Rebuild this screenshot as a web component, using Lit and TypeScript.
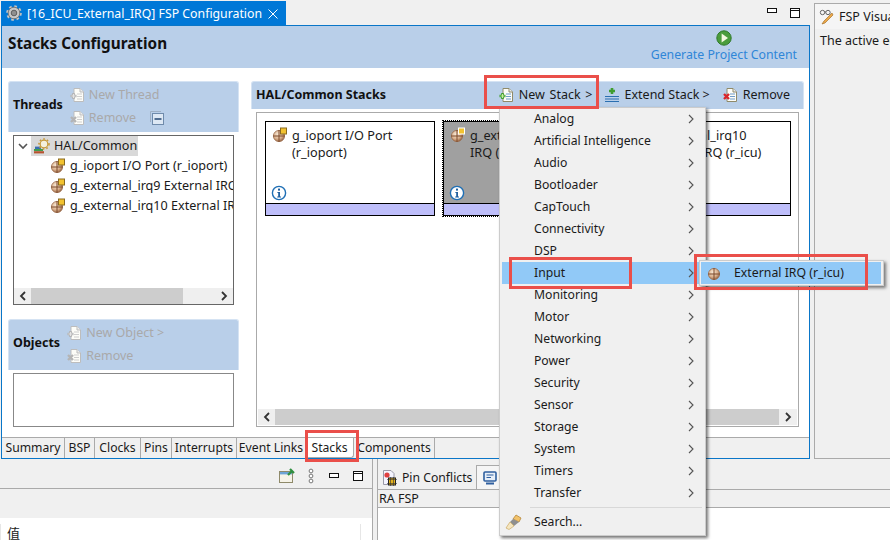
import { LitElement, html, css, svg } from "lit";
import { customElement } from "lit/decorators.js";

const comp = (badge = true, selected = false) => html`<svg class="ic" width="16" height="16" viewBox="0 0 16 16">
  <defs><radialGradient id="cg" cx="40%" cy="35%" r="70%"><stop offset="0" stop-color="#f8ead8"/><stop offset=".6" stop-color="#d8ae8a"/><stop offset="1" stop-color="#8e5b3a"/></radialGradient></defs>
  <circle cx="7" cy="9" r="5.6" fill="url(#cg)" stroke="#9a6b4a" stroke-width=".8"/>
  <path d="M7 3V15M1.2 9H12.8" stroke="#7d4a2c" stroke-width="1" fill="none"/>
  ${badge ? svg`<rect x="8.5" y="1" width="6" height="6" fill="#f2c230" stroke="${selected ? "#fff" : "#8a6a20"}" stroke-width="1"/>` : ""}
</svg>`;

const doc = (mark: "plus" | "x", on: boolean) => {
  const page = on ? "#8f8a6a" : "#bdbdbd";
  const lines = on ? "#6f9bc8" : "#cfcfcf";
  const c = mark === "plus" ? (on ? "#3f9d2f" : "#b4b4b4") : on ? "#d9262a" : "#b4b4b4";
  return html`<svg class="ic" width="16" height="16" viewBox="0 0 16 16">
    <path d="M5 1.5H11L14.5 5V14.5H5Z" fill="#fdfdf8" stroke="${page}" stroke-width="1"/>
    <path d="M11 1.5V5H14.5" fill="#eee" stroke="${page}"/>
    <path d="M8 7H13M8 9.5H13M8 12H13" stroke="${lines}" stroke-width="1"/>
    ${mark === "plus"
      ? svg`<path d="M4.5 6V12M1.5 9H7.5" stroke="${c}" stroke-width="2.6"/><path d="M4.5 7V11M2.5 9H6.5" stroke="${on ? "#c6ef9f" : "#e4e4e4"}" stroke-width="1"/>`
      : svg`<path d="M2 7L7 12M7 7L2 12" stroke="${c}" stroke-width="2.4"/>`}
  </svg>`;
};

const info = () => html`<svg class="ic" width="16" height="16" viewBox="0 0 16 16">
  <circle cx="8" cy="8" r="6.6" fill="#fff" stroke="#1f6fb5" stroke-width="1.4"/>
  <rect x="7" y="3.6" width="2" height="2" fill="#1f5f9f"/>
  <path d="M6.4 7H9V11.4H10V12.4H6.2V11.4H7.2V8H6.4Z" fill="#1f5f9f"/>
</svg>`;

const arrow = () => html`<svg class="arr" width="6" height="10" viewBox="0 0 6 10"><path d="M1 1L5 5L1 9" fill="none" stroke="#555" stroke-width="1.1"/></svg>`;

const scrollArrow = (left: boolean) => html`<svg width="8" height="10" viewBox="0 0 8 10"><path d="${left ? "M6 1L2 5L6 9" : "M2 1L6 5L2 9"}" fill="none" stroke="#333" stroke-width="1.8"/></svg>`;

const minIcon = () => html`<svg width="11" height="6" viewBox="0 0 11 6"><rect x=".5" y=".5" width="9" height="4" fill="#fff" stroke="#111"/></svg>`;
const maxIcon = () => html`<svg width="11" height="11" viewBox="0 0 11 11"><rect x=".5" y=".5" width="9" height="9" fill="#fff" stroke="#111"/><path d="M1 2.5H9" stroke="#111"/></svg>`;

const MENU = ["Analog","Artificial Intelligence","Audio","Bootloader","CapTouch","Connectivity","DSP","Input","Monitoring","Motor","Networking","Power","Security","Sensor","Storage","System","Timers","Transfer"];
const TABS = [["Summary",63],["BSP",30],["Clocks",46],["Pins",31],["Interrupts",65],["Event Links",69],["Stacks",48],["Components",81]] as const;

@customElement("app-root")
export class AppRoot extends LitElement {
  static styles = css`
    :host { display:block; position:relative; width:890px; height:540px; overflow:hidden; background:#f0f0f0; font:12.5px/16px "Noto Sans","Open Sans",sans-serif; color:#1a1a1a; }
    .ic, svg { display:block; flex:none; }
    .main { display:flex; height:459px; padding-left:1px; }
    .editor { width:809px; display:flex; flex-direction:column; }
    .tabbar { height:25px; display:flex; flex:none; padding-top:1px; box-sizing:border-box; }
    .edtab { width:285px; background:#0078d7; color:#fff; display:flex; align-items:center; padding:0 8px 0 5px; box-sizing:border-box; gap:5px; font-size:12.3px; white-space:nowrap; }
    .edtab span { padding-top:2px; }
    .edtab .x { margin:2px 0 0 auto; }
    .winbtns { margin-left:auto; display:flex; gap:12px; padding:7px 9px 0 0; }
    .frame { flex:1; border:1px solid #0a76c8; background:#fff; display:flex; flex-direction:column; min-height:0; }
    .head { height:42px; flex:none; background:#b9cfe9; display:flex; justify-content:space-between; padding:0 12px 0 6px; }
    .title { font-weight:700; font-size:15.3px; line-height:35px; color:#111; }
    .gen { display:flex; flex-direction:column; align-items:center; padding-top:4px; color:#2f86d8; font-size:12.3px; gap:1px; }
    .content { flex:1; display:flex; gap:12px; padding:13px 5px 0 6px; min-height:0; }
    .left { width:231px; display:flex; flex-direction:column; flex:none; }
    .sec { height:51px; flex:none; box-sizing:border-box; background:#b9cfe9; border:1px solid #d5e3f3; border-bottom:none; border-radius:3px 3px 0 0; display:flex; align-items:center; padding:0 0 2px 4px; }
    .sec b { font-size:12.5px; color:#111; margin-bottom:2px; }
    .btns { display:flex; flex-direction:column; gap:7px; margin-left:6px; }
    .btn { display:flex; align-items:center; gap:4px; color:#a9a9a9; height:16px; white-space:nowrap; }
    .collapse { margin-left:10px; }
    .tree { height:170px; margin:3px 5px 14px; border:1px solid #666; box-sizing:border-box; background:#fff; display:flex; flex-direction:column; overflow:hidden; flex:none; font-size:12.6px; }
    .rows { flex:1; padding-top:0; overflow:hidden; }
    .row { display:flex; align-items:center; height:20px; white-space:nowrap; gap:4px; padding-left:36px; }
    .row.root { padding-left:4px; gap:3px; }
    .chev { width:10px; }
    .rootlabel { display:flex; align-items:center; gap:3px; background:#d9d9d9; height:20px; padding:0 1px 0 2px; }
    .hs { height:16px; flex:none; background:#efefef; display:flex; align-items:center; justify-content:space-between; padding:0 5px; position:relative; }
    .thumb { position:absolute; top:0; bottom:0; background:#cdcdcd; }
    .tree .thumb { left:17px; width:152px; }
    .objbox { height:54px; margin:3px 5px 0; border:1px solid #888; box-sizing:border-box; background:#fff; flex:none; }
    .right { flex:1; display:flex; flex-direction:column; min-width:0; }
    .rhead { height:28px; flex:none; box-sizing:border-box; background:#b9cfe9; border:1px solid #d5e3f3; border-bottom:none; border-radius:3px 3px 0 0; display:flex; align-items:center; padding:0 13px 2px 4px; }
    .rhead b { font-size:12.5px; color:#111; }
    .tools { margin-left:auto; display:flex; align-items:center; gap:12px; }
    .tool { display:flex; align-items:center; gap:5px; color:#1a1a1a; white-space:nowrap; }
    .tool.new { word-spacing:1.5px; margin-right:-1px; }
    .stackbox { height:315px; margin:3px 5px 0; border:1px solid #aaa; box-sizing:border-box; display:flex; flex-direction:column; background:#fff; flex:none; }
    .cards { flex:1; display:flex; gap:8px; padding:8px 0 0 8px; font-size:12.7px; }
    .card { width:170px; height:95px; box-sizing:border-box; border:1px solid #000; display:flex; flex-direction:column; background:#fff; overflow:hidden; }
    .card.sel { background:#a0a0a0; outline:1px dotted #000; }
    .card .body { flex:1; position:relative; display:flex; gap:4px; padding:5px 0 0 6px; line-height:17px; white-space:nowrap; }
    .card .inf { position:absolute; left:5px; bottom:2px; }
    .strip { height:11px; flex:none; background:#bebefa; border-top:1px solid #000; }
    .stackbox .hs { margin:0 1px 1px; }
    .stackbox .thumb { left:17px; width:504px; }
    .pagetabs { margin-top:auto; height:21px; flex:none; background:#f0f0f0; border-top:1px solid #aaa; display:flex; font-size:12.2px; box-sizing:border-box; }
    .pt { box-sizing:border-box; border-right:1px solid #aaa; text-align:center; line-height:20px; }
    .pt.on { background:#fff; border-bottom:1px solid #aaa; border-radius:0 0 3px 3px; }
    .side { margin-left:4px; flex:1; border:1px solid #aaa; border-right:none; margin-top:3px; background:#f0f0f0; display:flex; flex-direction:column; overflow:hidden; }
    .sidetab { height:25px; flex:none; display:flex; align-items:center; gap:4px; padding:0 0 0 4px; white-space:nowrap; background:#f5f5f5; overflow:hidden; }
    .sidebody { padding:4px 0 0 5px; white-space:nowrap; background:#f0f0f0; flex:1; }
    .bottom { height:81px; display:flex; }
    .bl { width:372px; flex:none; display:flex; flex-direction:column; border-right:1px solid #aaa; }
    .bltool { height:30px; flex:none; box-sizing:border-box; border-bottom:1px solid #aaa; display:flex; align-items:center; justify-content:flex-end; gap:13px; padding:5px 8px 0 0; }
    .bltool .mn { margin-left:2px; }
    .blgap { height:29px; flex:none; }
    .blbody { flex:1; background:#fff; padding:6px 0 0 0; min-height:0; }
    .cols { width:361px; height:100%; box-sizing:border-box; border:solid #e6e6e6; border-width:0 1px; padding:0 0 0 6px; font-size:13px; line-height:18px; font-family:"Noto Sans CJK SC","Noto Sans",sans-serif; }
    .br { margin-left:4px; flex:1; display:flex; flex-direction:column; border-left:1px solid #aaa; }
    .brtabs { height:31px; flex:none; box-sizing:border-box; border-bottom:1px solid #aaa; display:flex; padding-top:6px; font-size:12.2px; }
    .brt { display:flex; align-items:center; gap:3px; padding:2px 0 0 3px; width:98px; box-sizing:border-box; white-space:nowrap; }
    .brt.on { width:40px; background:#f5f5f5; border:1px solid #aaa; border-bottom:none; padding:0 0 0 6px; }
    .brlabel { height:18px; flex:none; box-sizing:border-box; border-bottom:1px solid #aaa; padding-left:1px; line-height:17px; }
    .brbody { flex:1; background:#fff; }
    .menu { position:absolute; left:499px; top:107px; width:207px; height:429px; box-sizing:border-box; background:#f0f0f0; border:1px solid #ccc; box-shadow:2px 2px 3px rgba(0,0,0,.55); display:flex; flex-direction:column; font-size:12.2px; }
    .mi { height:22px; flex:none; display:flex; align-items:center; justify-content:space-between; padding:0 11px 0 34px; white-space:nowrap; }
    .mi.on { background:#91c9f7; margin-left:2px; padding-left:32px; }
    .sep { height:1px; background:#d8d8d8; margin:3px 3px 3px 30px; flex:none; }
    .search { justify-content:flex-start; padding-left:5px; gap:11px; }
    .sub { position:absolute; left:699px; top:260px; width:185px; height:26px; box-sizing:border-box; background:#f0f0f0; border:1px solid #ccc; padding:1px 2px 1px 1px; box-shadow:2px 2px 3px rgba(0,0,0,.5); font-size:12.3px; }
    .sub .mi2 { height:22px; background:#91c9f7; display:flex; align-items:center; gap:11px; padding-left:6px; white-space:nowrap; }
    .red { position:absolute; box-sizing:border-box; border:3px solid #ea4f4a; pointer-events:none; }
    .r1 { left:484px; top:75px; width:115px; height:34px; }
    .r2 { left:509px; top:257px; width:123px; height:32px; }
    .r3 { left:694px; top:254px; width:174px; height:36px; }
    .r4 { left:305px; top:430px; width:54px; height:32px; }
  `;

  render() {
    return html`
      <div class="main">
        <div class="editor">
          <div class="tabbar">
            <div class="edtab">
              <svg width="16" height="16" viewBox="0 0 16 16"><circle cx="8" cy="8" r="6.6" fill="none" stroke="#c4c4c4" stroke-width="2.4" stroke-dasharray="2.6 2.6"/><circle cx="8" cy="8" r="5.8" fill="#c8c8c8" stroke="#7a7a7a" stroke-width="1"/><circle cx="8" cy="8" r="2.8" fill="#8f8f8f" stroke="#5f5f5f"/></svg>
              <span>[16_ICU_External_IRQ] FSP Configuration</span>
              <svg class="x" width="10" height="10" viewBox="0 0 10 10"><path d="M.5 .5L9.5 9.5M9.5 .5L.5 9.5" stroke="#fff" stroke-width="1"/></svg>
            </div>
            <div class="winbtns">${minIcon()}${maxIcon()}</div>
          </div>
          <div class="frame">
            <div class="head">
              <div class="title">Stacks Configuration</div>
              <div class="gen">
                <svg width="16" height="16" viewBox="0 0 16 16"><circle cx="8" cy="8" r="7.2" fill="#4a9c3c" stroke="#2f7a2a"/><path d="M5.6 3.4L12 8L5.6 12.6Z" fill="#f4f8df"/></svg>
                <span>Generate Project Content</span>
              </div>
            </div>
            <div class="content">
              <div class="left">
                <div class="sec threads">
                  <b>Threads</b>
                  <div class="btns">
                    <div class="btn">${doc("plus", false)}<span>New Thread</span></div>
                    <div class="btn">${doc("x", false)}<span>Remove</span>
                      <svg class="collapse" width="14" height="14" viewBox="0 0 14 14"><rect x="2.5" y="2.5" width="11" height="11" fill="#dde8f4" stroke="#6f8bab"/><path d="M.5 11V.5H11" fill="none" stroke="#9fb0c4"/><path d="M4.5 8H11.5" stroke="#2f4f78" stroke-width="1.6"/></svg>
                    </div>
                  </div>
                </div>
                <div class="tree">
                  <div class="rows">
                    <div class="row root">
                      <svg class="chev" width="10" height="7" viewBox="0 0 10 7"><path d="M1 1L5 5L9 1" fill="none" stroke="#555" stroke-width="1.6"/></svg>
                      <div class="rootlabel">
                        <svg width="18" height="16" viewBox="0 0 18 16"><path d="M1 11H10V13H1Z" fill="#3f9d4f"/><path d="M1 13.2H11V15.4H1Z" fill="#b5532f"/><path d="M2 8.6H8V11H2Z" fill="#3a6fb0"/><circle cx="11" cy="6" r="3.8" fill="#f4f0de" stroke="#c79a3a" stroke-width="1.2"/><circle cx="11" cy="6" r="5" fill="none" stroke="#c79a3a" stroke-width="1.6" stroke-dasharray="1.6 2.1"/></svg>
                        <span>HAL/Common</span>
                      </div>
                    </div>
                    <div class="row">${comp()}<span>g_ioport I/O Port (r_ioport)</span></div>
                    <div class="row">${comp()}<span>g_external_irq9 External IRQ (r_icu)</span></div>
                    <div class="row">${comp()}<span>g_external_irq10 External IRQ (r_icu)</span></div>
                  </div>
                  <div class="hs"><div class="thumb"></div>${scrollArrow(true)}${scrollArrow(false)}</div>
                </div>
                <div class="sec objects">
                  <b>Objects</b>
                  <div class="btns">
                    <div class="btn">${doc("plus", false)}<span>New Object ></span></div>
                    <div class="btn">${doc("x", false)}<span>Remove</span></div>
                  </div>
                </div>
                <div class="objbox"></div>
              </div>
              <div class="right">
                <div class="rhead">
                  <b>HAL/Common Stacks</b>
                  <div class="tools">
                    <div class="tool new">${doc("plus", true)}<span>New Stack ></span></div>
                    <div class="tool">
                      <svg width="16" height="16" viewBox="0 0 16 16"><path d="M8 1V7M5 4H11" stroke="#3f9d2f" stroke-width="2.6"/><path d="M1 9.5H15M1 12H15M1 14.5H15" stroke="#2a6fb0" stroke-width="1.1"/></svg>
                      <span>Extend Stack ></span>
                    </div>
                    <div class="tool">${doc("x", true)}<span>Remove</span></div>
                  </div>
                </div>
                <div class="stackbox">
                  <div class="cards">
                    <div class="card"><div class="body">${comp()}<span>g_ioport I/O Port<br>(r_ioport)</span><div class="inf">${info()}</div></div><div class="strip"></div></div>
                    <div class="card sel"><div class="body">${comp(true, true)}<span>g_external_irq9 External<br>IRQ (r_icu)</span><div class="inf">${info()}</div></div><div class="strip"></div></div>
                    <div class="card"><div class="body">${comp()}<span>g_external_irq10<br>External IRQ (r_icu)</span><div class="inf">${info()}</div></div><div class="strip"></div></div>
                  </div>
                  <div class="hs"><div class="thumb"></div>${scrollArrow(true)}${scrollArrow(false)}</div>
                </div>
              </div>
            </div>
            <div class="pagetabs">
              ${TABS.map(([t, w]) => html`<div class="pt ${t === "Stacks" ? "on" : ""}" style="width:${w}px">${t}</div>`)}
            </div>
          </div>
        </div>
        <div class="side">
          <div class="sidetab">
            <svg width="16" height="16" viewBox="0 0 16 16"><circle cx="3.5" cy="3.5" r="2.2" fill="none" stroke="#666"/><circle cx="9" cy="3.5" r="2.2" fill="none" stroke="#666"/><path d="M5.5 3H7" stroke="#666"/><path d="M13 4L5 12L3 15L6 14L14 6Z" fill="#eda94a" stroke="#a8742c" stroke-width=".7"/></svg>
            <span>FSP Visualization</span>
          </div>
          <div class="sidebody">The active editor does not</div>
        </div>
      </div>
      <div class="bottom">
        <div class="bl">
          <div class="bltool">
            <svg width="16" height="16" viewBox="0 0 16 16"><rect x=".5" y="3.5" width="13" height="11" fill="#f6f3e8" stroke="#8f8a6a"/><rect x="1" y="4" width="12" height="2.4" fill="#6ea4d6"/><path d="M9 7L13 3M11 1L15 5" stroke="#2f8f3f" stroke-width="2.2"/></svg>
            <svg width="6" height="16" viewBox="0 0 6 16"><circle cx="3" cy="3" r="1.9" fill="#fff" stroke="#777"/><circle cx="3" cy="8" r="1.9" fill="#fff" stroke="#777"/><circle cx="3" cy="13" r="1.9" fill="#fff" stroke="#777"/></svg>
            <span class="mn">${minIcon()}</span>${maxIcon()}
          </div>
          <div class="blgap"></div>
          <div class="blbody"><div class="cols">值</div></div>
        </div>
        <div class="br">
          <div class="brtabs">
            <div class="brt">
              <svg width="18" height="18" viewBox="0 0 18 18"><path d="M2.5 1.5H10L13 4.5V15.5H2.5Z" fill="#f4f4ff" stroke="#9a9aa8"/><circle cx="6" cy="6" r="2.6" fill="#e04040"/><rect x="7.5" y="9" width="7" height="7" fill="#e3b21f" stroke="#222"/><path d="M6 10.5H16M6 14.5H16M9.5 8V17M12.5 8V17" stroke="#333" stroke-width=".6"/></svg>
              <span>Pin Conflicts</span>
            </div>
            <div class="brt on">
              <svg width="14" height="16" viewBox="0 0 14 16"><rect x="1" y="2" width="12" height="9" rx="1" fill="#e6eef8" stroke="#2f5f9f" stroke-width="1.6"/><path d="M3.5 5H10.5M3.5 7.5H8" stroke="#2f5f9f"/><path d="M3 13.5H11" stroke="#2f5f9f" stroke-width="2"/></svg>
            </div>
          </div>
          <div class="brlabel">RA FSP</div>
          <div class="brbody"></div>
        </div>
      </div>
      <div class="menu">
        ${MENU.map((m) => html`<div class="mi ${m === "Input" ? "on" : ""}"><span>${m}</span>${arrow()}</div>`)}
        <div class="sep"></div>
        <div class="mi search">
          <svg width="18" height="16" viewBox="0 0 18 16"><path d="M11 1L16 4L14 8L8 5Z" fill="#f2c26a" stroke="#b5863a" stroke-width=".8"/><path d="M8 5L14 8L9 12L5 8Z" fill="#8f8f8f"/><path d="M5 8L9 12L4 15.5L1 14Z" fill="#f5e6c0" stroke="#c9a860" stroke-width=".7"/></svg>
          <span>Search...</span>
        </div>
      </div>
      <div class="sub"><div class="mi2">${comp(false)}<span>External IRQ (r_icu)</span></div></div>
      <div class="red r1"></div><div class="red r2"></div><div class="red r3"></div><div class="red r4"></div>
    `;
  }
}
